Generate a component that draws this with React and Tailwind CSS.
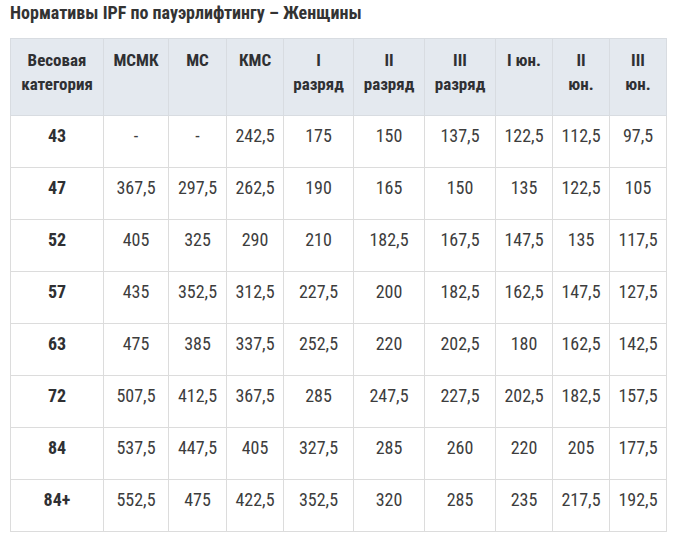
const headers = [
  ["Весовая", "категория"],
  ["МСМК"],
  ["МС"],
  ["КМС"],
  ["I", "разряд"],
  ["II", "разряд"],
  ["III", "разряд"],
  ["I юн."],
  ["II", "юн."],
  ["III", "юн."],
];

const widths = ["w-[93px]", "w-[65px]", "w-[58px]", "w-[57px]", "w-[70px]", "w-[71px]", "w-[71px]", "w-[57px]", "w-[57px]", "w-[57px]"];

const rows = [
  ["43", "-", "-", "242,5", "175", "150", "137,5", "122,5", "112,5", "97,5"],
  ["47", "367,5", "297,5", "262,5", "190", "165", "150", "135", "122,5", "105"],
  ["52", "405", "325", "290", "210", "182,5", "167,5", "147,5", "135", "117,5"],
  ["57", "435", "352,5", "312,5", "227,5", "200", "182,5", "162,5", "147,5", "127,5"],
  ["63", "475", "385", "337,5", "252,5", "220", "202,5", "180", "162,5", "142,5"],
  ["72", "507,5", "412,5", "367,5", "285", "247,5", "227,5", "202,5", "182,5", "157,5"],
  ["84", "537,5", "447,5", "405", "327,5", "285", "260", "220", "205", "177,5"],
  ["84+", "552,5", "475", "422,5", "352,5", "320", "285", "235", "217,5", "192,5"],
];

export default function App() {
  return (
    <div className="w-[673px] h-[537px] bg-white pl-[10px] font-['Roboto',sans-serif] font-stretch-condensed overflow-hidden">
      <h1 className="pt-[1px] mb-[13px] text-[18px] leading-[24px] font-bold text-[#333]">
        Нормативы IPF по пауэрлифтингу – Женщины
      </h1>
      <table className="table-fixed border-collapse w-[656px] text-[17px] leading-[24px]">
        <colgroup>
          {widths.map((w, i) => (
            <col key={i} className={w} />
          ))}
        </colgroup>
        <thead>
          <tr className="h-[77px] bg-[#e4e9ef]">
            {headers.map((h, i) => (
              <th
                key={i}
                className="border border-[#d8dce1] align-top pt-[9px] px-0 text-center font-bold text-[#2f3033]"
              >
                {h.map((line, j) => (
                  <div key={j}>{line}</div>
                ))}
              </th>
            ))}
          </tr>
        </thead>
        <tbody>
          {rows.map((r, i) => (
            <tr key={i} className="h-[52px]">
              {r.map((c, j) => (
                <td
                  key={j}
                  className={
                    "border border-[#dcdcdc] align-top pt-[8px] px-0 text-center text-[18px] " +
                    (j === 0 ? "font-bold text-[#2f3033]" : "text-[#3d3d3d]")
                  }
                >
                  {c}
                </td>
              ))}
            </tr>
          ))}
        </tbody>
      </table>
    </div>
  );
}
